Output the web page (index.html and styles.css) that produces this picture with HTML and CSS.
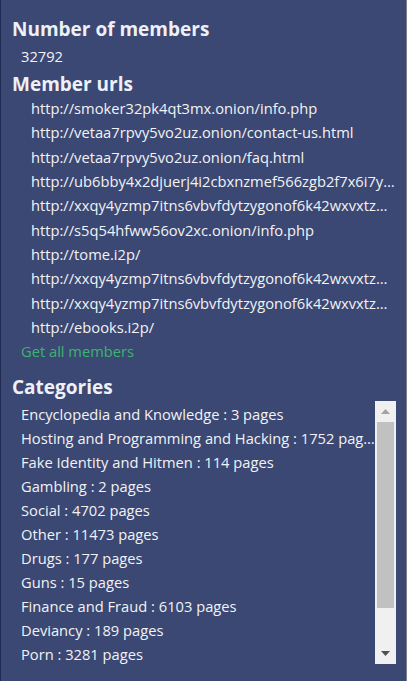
FILE: index.html
```
<!DOCTYPE html>
<html>
<head>
<meta charset="utf-8">
<link rel="stylesheet" href="styles.css">
</head>
<body>
<div class="panel">
  <h2 class="title">Number of members</h2>
  <div class="value">32792</div>
  <h2 class="title t2">Member urls</h2>
  <ul class="urls">
    <li>http://smoker32pk4qt3mx.onion/info.php</li>
    <li>http://vetaa7rpvy5vo2uz.onion/contact-us.html</li>
    <li>http://vetaa7rpvy5vo2uz.onion/faq.html</li>
    <li>http://ub6bby4x2djuerj4i2cbxnzmef566zgb2f7x6i7yfvdmlmokdtaqd.onion/</li>
    <li>http://xxqy4yzmp7itns6vbvfdytzygonof6k42wxvxtzp5jvwghlm7xtc3wyd.onion/</li>
    <li>http://s5q54hfww56ov2xc.onion/info.php</li>
    <li>http://tome.i2p/</li>
    <li>http://xxqy4yzmp7itns6vbvfdytzygonof6k42wxvxtzp5jvwghlm7xtc3wyd.onion/forum</li>
    <li>http://xxqy4yzmp7itns6vbvfdytzygonof6k42wxvxtzp5jvwghlm7xtc3wyd.onion/about</li>
    <li>http://ebooks.i2p/</li>
  </ul>
  <a class="more">Get all members</a>
  <h2 class="title t3">Categories</h2>
  <div class="catbox">
    <ul class="cats">
      <li>Encyclopedia and Knowledge : 3 pages</li>
      <li>Hosting and Programming and Hacking : 1752 pages</li>
      <li>Fake Identity and Hitmen : 114 pages</li>
      <li>Gambling : 2 pages</li>
      <li>Social : 4702 pages</li>
      <li>Other : 11473 pages</li>
      <li>Drugs : 177 pages</li>
      <li>Guns : 15 pages</li>
      <li>Finance and Fraud : 6103 pages</li>
      <li>Deviancy : 189 pages</li>
      <li>Porn : 3281 pages</li>
      <li>Hosting : 96 pages</li>
    </ul>
    <div class="sbar">
      <div class="sbtn up"><svg width="9" height="5" viewBox="0 0 9 5"><path d="M0 5 L4.5 0 L9 5 Z" fill="#a3a3a3"/></svg></div>
      <div class="strack"><div class="thumb"></div></div>
      <div class="sbtn down"><svg width="9" height="5" viewBox="0 0 9 5"><path d="M0 0 L9 0 L4.5 5 Z" fill="#505050"/></svg></div>
    </div>
  </div>
</div>
</body>
</html>
```
FILE: styles.css
```
html, body {
  margin: 0;
  padding: 0;
  background: #3b4873;
}
body {
  font-family: "Open Sans", "Noto Sans", sans-serif;
  color: #f2f2f4;
}
.panel {
  box-sizing: border-box;
  width: 407px;
  height: 681px;
  border-left: 1px solid #1f2b52;
  border-right: 1px solid #7d7f8a;
  padding: 16px 0 0 11px;
  overflow: hidden;
}
.title {
  margin: 0;
  font-size: 19px;
  font-weight: 700;
  line-height: 26px;
  color: #eef0f6;
}
.value {
  margin: 2px 0 0 9px;
  font-size: 14.7px;
  line-height: 24px;
}
.t2 { margin-top: 3px; }
.urls {
  list-style: none;
  margin: -1px 0 0 0;
  padding: 0 0 0 19px;
  font-size: 14.7px;
  line-height: 24.35px;
}
.urls li {
  width: 364px;
  white-space: nowrap;
  overflow: hidden;
  text-overflow: ellipsis;
}
.more {
  display: block;
  margin-left: 9px;
  color: #3cb371;
  font-size: 14.7px;
  line-height: 24px;
}
.t3 { margin-top: 11px; }
.catbox {
  display: flex;
  margin-top: 1px;
  height: 263px;
}
.cats {
  list-style: none;
  margin: 0;
  padding: 1px 0 0 9px;
  width: 354px;
  overflow: hidden;
  font-size: 14.7px;
  line-height: 24px;
}
.cats li {
  white-space: nowrap;
  overflow: hidden;
  text-overflow: ellipsis;
}
.sbar {
  width: 21px;
  background: #f0f0f0;
  display: flex;
  flex-direction: column;
}
.sbtn {
  height: 21px;
  display: flex;
  align-items: center;
  justify-content: center;
}
.strack {
  flex: 1;
  padding: 0 2px;
}
.thumb {
  height: 186px;
  background: #c1c1c1;
}
```
